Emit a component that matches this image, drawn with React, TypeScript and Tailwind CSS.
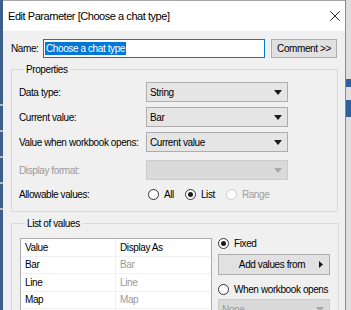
import { X } from 'lucide-react'

function Caret({ disabled }: { disabled?: boolean }) {
  return (
    <svg width="8" height="5" viewBox="0 0 8 5" className="shrink-0">
      <path d="M0 0H8L4 5Z" fill={disabled ? '#a8a8a8' : '#1a1a1a'} />
    </svg>
  )
}

function Select({ value, disabled }: { value?: string; disabled?: boolean }) {
  return (
    <div
      className={`flex h-[20px] w-[142px] items-center justify-between border pl-[3px] pr-[5px] ${
        disabled ? 'border-[#cccccc] bg-[#dadada] text-[#9a9a9a]' : 'border-[#adadad] bg-[#e5e5e5] text-black'
      }`}
    >
      <span>{value}</span>
      <Caret disabled={disabled} />
    </div>
  )
}

function Radio({ checked, disabled, label }: { checked?: boolean; disabled?: boolean; label: string }) {
  return (
    <div className={`flex items-center gap-[5px] whitespace-nowrap ${disabled ? 'text-[#a0a0a0]' : 'text-black'}`}>
      <span
        className={`flex h-[11px] w-[11px] shrink-0 items-center justify-center rounded-full border bg-white ${
          disabled ? 'border-[#cccccc]' : 'border-[#333333]'
        }`}
      >
        {checked && <span className="h-[5px] w-[5px] rounded-full bg-[#1a1a1a]" />}
      </span>
      <span>{label}</span>
    </div>
  )
}

function PropRow({ label, children, muted }: { label: string; children: React.ReactNode; muted?: boolean }) {
  return (
    <div className="flex items-center">
      <span className={`w-[127px] shrink-0 whitespace-nowrap ${muted ? 'text-[#9a9a9a]' : 'text-black'}`}>{label}</span>
      {children}
    </div>
  )
}

const values = ['Bar', 'Line', 'Map', '']

export default function App() {
  return (
    <div
      className="flex h-[310px] w-[351px] overflow-hidden bg-[#f0f0f0] text-[10px] tracking-[-0.4px] text-black"
      style={{ fontFamily: '"Liberation Sans", Arial, sans-serif' }}
    >
      {/* window behind, left edge */}
      <div className="flex w-[3px] shrink-0 flex-col bg-[#3c5f8c]">
        <div className="mt-[104px] h-[2px] bg-[#b9b9b9]" />
        <div className="mt-[24px] h-[2px] bg-[#b9b9b9]" />
        <div className="mt-[24px] h-[2px] bg-[#b9b9b9]" />
        <div className="mt-[24px] h-[2px] bg-[#b9b9b9]" />
        <div className="mt-[24px] h-[2px] bg-[#b9b9b9]" />
      </div>

      <div className="flex min-w-0 flex-1 flex-col border-t border-[#a7a7a7]">
        {/* title bar */}
        <div className="flex h-[30px] shrink-0 items-center justify-between bg-white pl-[5px] pr-[1px]">
          <span className="text-[11px] tracking-[-0.45px]">Edit Parameter [Choose a chat type]</span>
          <X size={18} strokeWidth={1.3} className="text-[#222]" />
        </div>

        <div className="flex flex-1 flex-col px-[8px] pt-[8px]">
          {/* name row */}
          <div className="flex items-center">
            <span className="w-[32px] shrink-0">Name:</span>
            <div className="flex h-[19px] w-[222px] items-center border border-[#0078d7] bg-white px-[1px]">
              <span className="bg-[#0078d7] px-[1px] leading-[13px] text-white">Choose a chat type</span>
            </div>
            <button className="ml-[6px] h-[19px] w-[66px] border border-[#adadad] bg-[#e1e1e1] text-[10px]">
              Comment &gt;&gt;
            </button>
          </div>

          {/* properties */}
          <fieldset className="mt-[4px] w-[327px] border border-[#d9d9d9] px-[7px] pb-[7px] pt-[5px]">
            <legend className="ml-[5px] px-[2px]">Properties</legend>
            <div className="flex flex-col gap-[5px]">
              <PropRow label="Data type:">
                <Select value="String" />
              </PropRow>
              <PropRow label="Current value:">
                <Select value="Bar" />
              </PropRow>
              <PropRow label="Value when workbook opens:">
                <Select value="Current value" />
              </PropRow>
              <div className="mt-[3px]">
                <PropRow label="Display format:" muted>
                  <Select disabled />
                </PropRow>
              </div>
              <div className="flex h-[19px] items-center">
                <span className="w-[129px] shrink-0">Allowable values:</span>
                <div className="flex items-center gap-[11px]">
                  <Radio label="All" />
                  <Radio label="List" checked />
                  <Radio label="Range" disabled />
                </div>
              </div>
            </div>
          </fieldset>

          {/* list of values */}
          <fieldset className="mt-[4px] w-[327px] flex-1 border border-[#d9d9d9] px-[8px] pt-[7px]">
            <legend className="ml-[5px] px-[2px]">List of values</legend>
            <div className="flex items-start gap-[6px]">
              <div className="w-[192px] border border-[#acacac] bg-white">
                {[['Value', 'Display As'], ...values.map((v) => [v, v])].map(([a, b], i) => (
                  <div key={i} className="flex h-[17.5px] items-center border-b border-[#f0f0f0]">
                    <span className="w-[95px] border-r border-[#f0f0f0] pl-[4px] leading-[17px]">{a || '\u00a0'}</span>
                    <span className={`pl-[4px] ${i === 0 ? 'text-black' : 'text-[#9a9a9a]'}`}>{b}</span>
                  </div>
                ))}
              </div>
              <div className="flex w-[112px] flex-col">
                <div className="-mt-[1px] flex h-[13px] items-center">
                  <Radio label="Fixed" checked />
                </div>
                <button className="mt-[4px] flex h-[21px] items-center justify-center border border-[#adadad] bg-[#e1e1e1] pl-[6px] pr-[6px]">
                  <span className="flex-1 text-center">Add values from</span>
                  <svg width="4" height="7" viewBox="0 0 4 7">
                    <path d="M0 0L4 3.5L0 7Z" fill="#1a1a1a" />
                  </svg>
                </button>
                <div className="mt-[7px] flex h-[14px] items-center">
                  <Radio label="When workbook opens" />
                </div>
                <div className="mt-[3px] flex h-[20px] items-center justify-between border border-[#cccccc] bg-[#dadada] pl-[3px] pr-[5px] text-[#9a9a9a]">
                  <span>None</span>
                  <Caret disabled />
                </div>
              </div>
            </div>
          </fieldset>
        </div>
      </div>

      {/* window behind, right edge */}
      <div className="flex w-[6px] shrink-0 flex-col border-l border-[#8a8a8a] bg-[#dedede]">
        <div className="mt-[79px] h-[8px] bg-[#2f5f9f]" />
        <div className="mt-[13px] h-[17px] bg-[#2f5f9f]" />
      </div>
    </div>
  )
}
